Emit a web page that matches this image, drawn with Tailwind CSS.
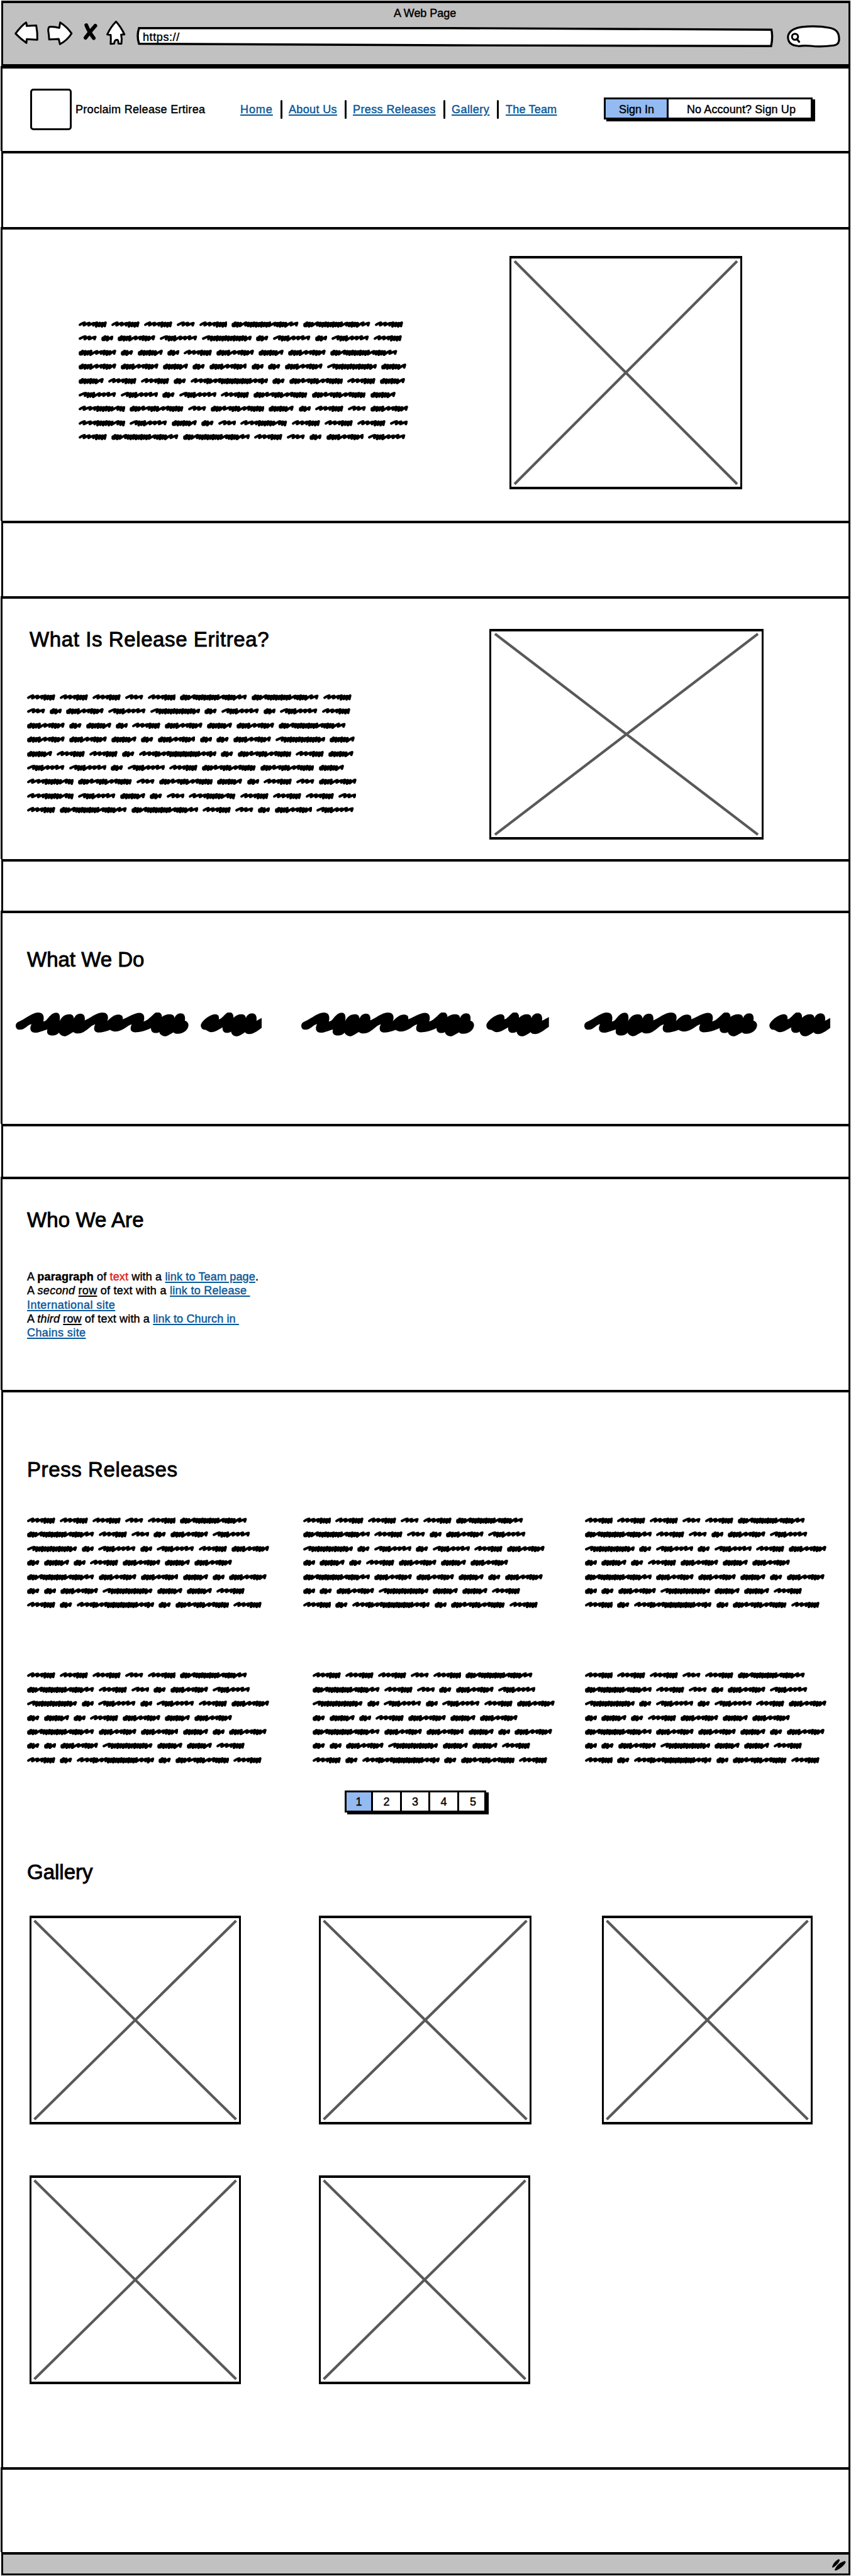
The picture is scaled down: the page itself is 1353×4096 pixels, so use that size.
<!DOCTYPE html>
<html lang="en">
<head>
<meta charset="utf-8">
<title>A Web Page</title>
<script src="https://cdn.jsdelivr.net/npm/@tailwindcss/browser@4"></script>
</head>
<body class="bg-white">
<div class="flex h-[4096px] w-[1353px] flex-col overflow-hidden bg-white font-['Liberation_Sans',Arial,sans-serif] text-[18px] leading-[22px] text-black [-webkit-text-stroke:0.45px] [&_h2]:[-webkit-text-stroke:0.9px]">

  <!-- browser chrome -->
  <div class="mt-px mr-[1px] ml-[2px] h-[104px] shrink-0 border-x-3 border-t-4 border-b-3 border-black bg-[#c1c1c1]">
    <div class="pt-[5px] pr-[3px] text-center tracking-[-0.05px]">A Web Page</div>
    <div class="-mt-px flex">
      <svg class="h-[56px] w-[210px] shrink-0" viewBox="5 31 210 56" fill="#fff" stroke="#000" stroke-width="3" stroke-linejoin="round" stroke-linecap="round">
        <path d="M24.7 53.4Q34 41 41.5 35.8Q42.8 38 42.3 41.2L57.6 40.4Q59.8 52 59.3 63.2L42.5 62.2L42 68.3Q33 62 24.700 53.4Z"/>
        <path d="M78.400 42.700Q86 42 94.200 44.400L95.700 35.700Q107 43 113.800 53.200Q107 64 95.300 70.200L93.400 62L78.200 62.800Q77.800 55 76.700 49Q76.600 44 78.400 42.700Z"/>
        <path d="M137.200 40Q141 50 149 60.500M151.500 41Q144 49 136 60" fill="none" stroke-width="6"/>
        <path d="M184.500 34.300Q193 44 197.800 54.800L192.600 55Q194.200 62 193 69.500L188.300 69.300Q188.500 63.500 186 63.300Q182 63.300 181.500 69.300L175.900 69.800Q176.600 62 176 55.600L170.500 54.800Q176 43 184.500 34.300Z"/>
      </svg>
      <div class="relative ml-[2px] h-[46px] w-[1013px] shrink-0">
        <svg class="absolute inset-0 h-[46px] w-[1013px]" viewBox="0 0 1013 46" fill="#fff" stroke="#000" stroke-width="3.400"><path d="M4 13.700L500 13.700L1009.500 16.200Q1012 28 1009 42.200L500 41L4 38.600Q0 26 4 13.700Z"/></svg>
        <div class="relative pt-[17px] pl-[10px] tracking-[0.6px]">https://</div>
      </div>
      <svg class="ml-[19px] h-[46px] w-[90px]" viewBox="1248 31 90 46" fill="#fff" stroke="#000" stroke-width="3.200"><path d="M1267.500 73Q1252 72 1251.800 59Q1252.500 46 1274 42.800Q1298 40.500 1318 44.200Q1333.500 47 1333 62Q1333.500 72 1322 72.500Q1303 75 1288 73Q1276 72 1267.500 73.500"/><circle cx="1263" cy="58.500" r="4.800" fill="none" stroke-width="3"/><path d="M1266 62L1269.500 66.500" stroke-linecap="round"/></svg>
    </div>
  </div>

  <!-- header -->
  <header class="mx-px flex h-[135px] shrink-0 items-center border-x-3 border-t-4 border-black pb-[2px]">
    <div class="ml-[44px] h-[66px] w-[66px] shrink-0 rounded-[5px] border-3 border-black"></div>
    <div class="ml-[6px] w-[262px] shrink-0 pt-px whitespace-nowrap tracking-[0.3px]">Proclaim Release Ertirea</div>
    <nav class="flex shrink-0 items-center whitespace-nowrap text-[#0b5899] underline decoration-2 underline-offset-[2px]">
      <a class="w-[64px] tracking-[0.9px]">Home</a><i class="h-[30px] w-[3px] rounded bg-black"></i>
      <a class="ml-[10px] w-[89px] tracking-[0.350px]">About Us</a><i class="h-[30px] w-[3px] rounded bg-black"></i>
      <a class="ml-[10px] w-[144px] tracking-[0.400px]">Press Releases</a><i class="h-[30px] w-[3px] rounded bg-black"></i>
      <a class="ml-[10px] w-[72px] tracking-[0.450px]">Gallery</a><i class="h-[30px] w-[3px] rounded bg-black"></i>
      <a class="ml-[11px] w-[156px] tracking-[0.200px]">The Team</a>
    </nav>
    <div class="mb-[2px] flex h-[35px] w-[332px] shrink-0 border-3 border-black text-center leading-[32px] whitespace-nowrap shadow-[4px_3px_0_#000]">
      <div class="w-[100px] border-r-3 border-black bg-[#94baf2] pl-px">Sign In</div>
      <div class="flex-1 pl-[5px] tracking-[0.100px]">No Account? Sign Up</div>
    </div>
  </header>

  <div class="mr-[1px] ml-[2px] h-[121px] shrink-0 border-x-3 border-t-4 border-black"></div>

  <!-- intro -->
  <section class="mx-px flex h-[467px] shrink-0 border-x-3 border-t-4 border-black">
    <div data-scribble="long" class="mt-[146px] ml-[121px] flex w-[685px] flex-col gap-[12.420px]"></div>
    <div data-image class="mt-[42px] h-[371px] w-[370px]"></div>
  </section>

  <div class="mr-[1px] ml-[2px] h-[120px] shrink-0 border-x-3 border-t-4 border-black"></div>

  <!-- what is release eritrea -->
  <section class="mx-px flex h-[418px] shrink-0 border-x-3 border-t-4 border-black">
    <div class="ml-[39px] w-[735px]">
      <h2 class="mt-[45px] ml-[4px] text-[33px] leading-[40px] tracking-[0.600px]">What Is Release Eritrea?</h2>
      <div data-scribble="long" class="mt-[67px] flex flex-col gap-[12.420px]"></div>
    </div>
    <div data-image class="mt-[48px] h-[335px] w-[436px]"></div>
  </section>

  <div class="mr-[1px] ml-[2px] h-[82px] shrink-0 border-x-3 border-t-4 border-black"></div>

  <!-- what we do -->
  <section class="mx-px h-[339px] shrink-0 border-x-3 border-t-4 border-black">
    <h2 class="mt-[54px] ml-[39px] text-[33px] leading-[40px]">What We Do</h2>
    <div class="mt-[63px] ml-[21px] flex">
      <div data-blob="391" class="w-[454px]"></div>
      <div data-blob="394" class="w-[450px]"></div>
      <div data-blob="391"></div>
    </div>
  </section>

  <div class="mr-[1px] ml-[2px] h-[84px] shrink-0 border-x-3 border-t-4 border-black"></div>

  <!-- who we are -->
  <section class="mx-px h-[339px] shrink-0 border-x-3 border-t-4 border-black pl-[39px]">
    <h2 class="mt-[45px] text-[33px] leading-[40px] tracking-[0.1px]">Who We Are</h2>
    <div class="mt-[59px] leading-[22.250px] whitespace-nowrap [&_a]:text-[#0b5899] [&_a]:underline [&_a]:decoration-2 [&_a]:underline-offset-2 [&_u]:decoration-2 [&_u]:underline-offset-2">
      <p class="tracking-[0.160px]">A <b>paragraph</b> of <span class="text-[#e02020]">text</span> with a <a>link to Team page</a>.</p>
      <p class="tracking-[0.280px]">A <i>second</i> <u>row</u> of text with a <a>link to Release&nbsp;</a></p>
      <p class="tracking-[0.450px]"><a>International site</a></p>
      <p class="tracking-[0.150px]">A <i>third</i> <u>row</u> of text with a <a>link to Church in&nbsp;</a></p>
      <p class="tracking-[0.400px]"><a>Chains site</a></p>
    </div>
  </section>

  <!-- press releases and gallery -->
  <section class="mr-[1px] ml-[2px] h-[1713px] shrink-0 border-x-3 border-t-4 border-black pl-[38px]">
    <h2 class="mt-[103px] text-[33px] leading-[40px] tracking-[0.600px]">Press Releases</h2>
    <div class="mt-[56px] flex">
      <div data-scribble="short" class="flex w-[438.500px] flex-col gap-[12.420px]"></div>
      <div data-scribble="short" class="flex w-[448px] flex-col gap-[12.420px]"></div>
      <div data-scribble="short" class="flex flex-col gap-[12.420px]"></div>
    </div>
    <div class="mt-[102px] flex">
      <div data-scribble="short" class="flex w-[454px] flex-col gap-[12.420px]"></div>
      <div data-scribble="short" class="flex w-[432.500px] flex-col gap-[12.420px]"></div>
      <div data-scribble="short" class="flex flex-col gap-[12.420px]"></div>
    </div>
    <div class="mt-[43px] ml-[505px] flex h-[35px] w-[225px] divide-x-3 divide-black border-3 border-black text-center leading-[31px] shadow-[4px_3px_0_#000]">
      <div class="w-[42px] bg-[#94baf2]">1</div>
      <div class="w-[46px]">2</div>
      <div class="w-[45px]">3</div>
      <div class="w-[46px]">4</div>
      <div class="flex-1 pl-[4px]">5</div>
    </div>
    <h2 class="mt-[75px] text-[33px] leading-[40px]">Gallery</h2>
    <div class="mt-[49px] ml-[4px] flex">
      <div data-image class="mr-[124px] h-[332px] w-[336px]"></div>
      <div data-image class="mr-[112px] h-[332px] w-[338px]"></div>
      <div data-image class="h-[332px] w-[335px]"></div>
    </div>
    <div class="mt-[81px] ml-[4px] flex">
      <div data-image class="mr-[124px] h-[332px] w-[336px]"></div>
      <div data-image class="h-[332px] w-[336px]"></div>
    </div>
  </section>

  <section class="mx-px h-[135px] shrink-0 border-x-3 border-t-4 border-black"></section>

  <!-- status bar -->
  <div class="mr-[1px] ml-[2px] flex h-[37px] shrink-0 justify-end border-3 border-t-4 border-black bg-[#c1c1c1]">
    <svg class="mt-[6px] mr-[3px] h-[22px] w-[24px]" viewBox="1322 4068 24 22"><path d="M1323 4081.500Q1325 4074 1333 4069.200Q1336 4069.500 1334.500 4072.500Q1331 4079 1324.500 4082.500Q1322.800 4083 1323 4081.500ZM1327 4086Q1331 4076 1342.500 4072.200Q1345.500 4072.500 1344 4075.500Q1339 4083 1329.500 4087.200Q1327 4087.500 1327 4086Z"/></svg>
  </div>
</div>

<script>
  // Scribbled words: drawn width and pen strokes (d = tight, u = loose, w = wide)
  const WORDS = {
    A: [44.9, 'uuudddd'], B: [28.7, 'wuw'], D: [106.6, 'dddwdddddddddwddddww'],
    E: [19.6, 'ddu'], F: [59.9, 'ddddwudddu'], G: [59.5, 'wdddwuuw'],
    H: [79.5, 'wdddddddddddddu'], I: [40, 'ddddddw'], J: [85.6, 'ddduwdddwuddddd'],
    K: [74.4, 'uwuddddddwdd'], L: [123.4, 'uwuddwuddddddddddddwudu']
  };
  const ROWS = {
    long: ['AAABADDA', 'BEFGHEGEGA', 'FEIEAFIFD', 'FFIEFEEFHI', 'IAAELEJAI', 'GGEGAJJI', 'KJBJIEABF', 'KGIEBKAAAB', 'ADDABEFG'],
    short: ['AAABAD', 'DABEFG', 'HEGEGAF', 'EIEAFIF', 'DFFIEF', 'EEFHIIA', 'AELEJA']
  };
  const ADV = { d: 4.5, u: 7.5, w: 9.5 };
  const word = k => {
    const [w, pen] = WORDS[k];
    const scale = (w - 4.2) / [...pen].reduce((s, c) => s + ADV[c], 0);
    let x = 2.1, d = 'M' + x + ' ' + (pen[0] === 'd' ? 7 : 5.4);
    if (pen[0] === 'd') d += 'L' + (x + 0.2) + ' 4.200L' + (x + 0.6) + ' 7.600';
    [...pen].forEach((c, i) => {
      x += ADV[c] * scale;
      const top = 2.1 + (i % 3) * 0.35, low = c === 'd' ? 7.4 + (i % 2) * 0.7 : 6.3;
      d += 'Q' + (x - 2).toFixed(1) + ' ' + top + ' ' + x.toFixed(1) + ' ' + top + 'L' + (x - 1.3).toFixed(1) + ' ' + low;
    });
    return `<svg width="${w}" height="10" viewBox="0 0 ${w} 10" fill="none" stroke="#000" stroke-width="4" stroke-linecap="round" stroke-linejoin="round"><path d="${d}"/></svg>`;
  };
  document.querySelectorAll('[data-scribble]').forEach(el => {
    el.innerHTML = ROWS[el.dataset.scribble].map(r =>
      `<div class="flex h-[10px] gap-[7.050px]">${[...r].map(word).join('')}</div>`).join('');
  });
  document.querySelectorAll('[data-image]').forEach(el => {
    el.innerHTML = '<svg class="h-full w-full border-x-3 border-y-4 border-black" viewBox="0 0 100 100" preserveAspectRatio="none" stroke="#595959" stroke-width="4.200"><path vector-effect="non-scaling-stroke" d="M1.400 1.200L98.600 98.800M98.600 1.200L1.400 98.800"/></svg>';
  });
  const BLOB = 'M41 130C41 110 60 103 75 95C110 75 145 42 178 42C210 42 215 70 208 103C225 100 228 90 238 78C255 55 270 43 286 43C307 43 312 65 307 100C320 70 340 54 366 54C385 54 392 65 394 82C402 62 415 50 433 50C455 50 463 70 459 95C490 82 530 42 565 42C600 42 606 70 596 100C615 80 635 56 663 56C685 56 693 70 689 88C720 75 760 44 792 44C820 44 825 75 816 103C845 95 875 50 890 42L912 42C925 50 928 62 926 72C940 62 955 54 972 54C995 54 1003 65 1003 80C1010 60 1022 47 1040 47C1065 47 1070 70 1066 96C1082 102 1089 115 1088 130C1086 160 1055 185 1025 185C1010 185 1000 180 997 175C980 185 960 202 945 202C925 200 912 185 912 173C895 185 860 185 861 147C830 165 790 175 765 175C735 175 732 150 744 122C715 130 690 170 645 170C630 170 620 165 613 159C590 170 565 177 545 177C515 177 510 150 523 122C490 130 465 183 420 183C405 183 395 178 390 173C370 185 350 202 335 202C315 200 308 185 302 178C295 192 278 197 262 197C235 197 227 180 233 155C205 165 180 178 158 178C130 178 122 150 137 120C115 122 95 158 67 158C50 158 41 148 41 130ZM1163 130C1163 100 1220 54 1250 54C1270 54 1275 70 1272 88C1290 85 1310 50 1325 42L1347 42C1360 52 1362 65 1360 78C1375 62 1390 54 1408 54C1428 54 1435 65 1436 80C1442 60 1455 47 1474 47C1498 47 1504 70 1500 97C1512 92 1520 84 1530 80L1542 72V138L1530 147C1505 168 1480 187 1458 187C1443 187 1436 182 1431 174C1412 188 1395 202 1378 202C1358 200 1348 185 1346 170C1330 185 1290 185 1295 142C1270 158 1250 174 1225 174C1205 174 1200 156 1181 158C1168 152 1163 142 1163 130Z';
  // The blob is cut off at its column's right edge
  document.querySelectorAll('[data-blob]').forEach(el => {
    const w = +el.dataset.blob;
    el.innerHTML = `<svg width="${w}" height="39" viewBox="41 38 ${w / 0.2623} 165" preserveAspectRatio="none"><path d="${BLOB}"/></svg>`;
  });
</script>
</body>
</html>
